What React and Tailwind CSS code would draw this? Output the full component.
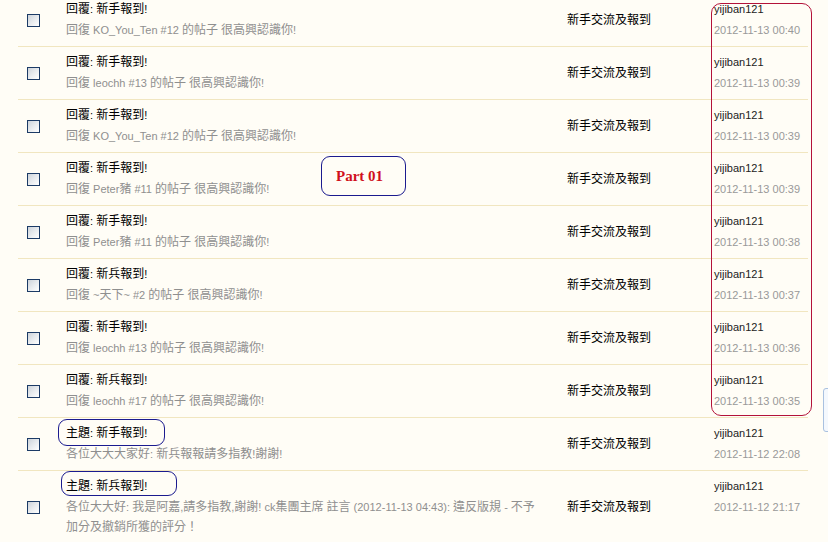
// Forum "my replies" list with red/blue annotation marks drawn over it.
const ROWS = [
  { title: '回覆: 新手報到!', sub: '回復 KO_You_Ten #12 的帖子 很高興認識你!', date: '2012-11-13 00:40' },
  { title: '回覆: 新手報到!', sub: '回復 leochh #13 的帖子 很高興認識你!', date: '2012-11-13 00:39' },
  { title: '回覆: 新手報到!', sub: '回復 KO_You_Ten #12 的帖子 很高興認識你!', date: '2012-11-13 00:39' },
  { title: '回覆: 新手報到!', sub: '回復 Peter豬 #11 的帖子 很高興認識你!', date: '2012-11-13 00:39' },
  { title: '回覆: 新手報到!', sub: '回復 Peter豬 #11 的帖子 很高興認識你!', date: '2012-11-13 00:38' },
  { title: '回覆: 新兵報到!', sub: '回復 ~天下~ #2 的帖子 很高興認識你!', date: '2012-11-13 00:37' },
  { title: '回覆: 新手報到!', sub: '回復 leochh #13 的帖子 很高興認識你!', date: '2012-11-13 00:36' },
  { title: '回覆: 新兵報到!', sub: '回復 leochh #17 的帖子 很高興認識你!', date: '2012-11-13 00:35' },
  { title: '主題: 新手報到!', sub: '各位大大大家好: 新兵報報請多指教!謝謝!', date: '2012-11-12 22:08' },
  {
    title: '主題: 新兵報到!',
    sub: '各位大大好: 我是阿嘉,請多指教,謝謝! ck集團主席 註言 (2012-11-13 04:43): 違反版規 - 不予',
    sub2: '加分及撤銷所獲的評分！',
    date: '2012-11-12 21:17',
  },
]

// latin runs a touch smaller than the CJK glyphs, like the old Tahoma/MingLiU mix
function Mixed({ text }) {
  return text.split(/([\x00-\x7F]+)/).map((part, i) =>
    /^[\x00-\x7F]+$/.test(part) ? (
      <span key={i} className="text-[11px]">{part}</span>
    ) : (
      part
    )
  )
}

function Checkbox() {
  return (
    <span className="block h-[13px] w-[13px] border border-[#1c3b66] bg-gradient-to-br from-[#cdd3da] via-[#e8ebee] to-white" />
  )
}

function Row({ row }) {
  return (
    <div className="flex border-b border-[#f1e6c0]">
      <div className="flex w-[48px] shrink-0 items-center pl-[9px]">
        <Checkbox />
      </div>
      <div className="w-[501px] shrink-0 pt-[5px] pb-[6px] pr-[20px]">
        <div className="text-[12px] leading-[20px] text-black">
          <Mixed text={row.title} />
        </div>
        <div className="mt-px text-[12px] leading-[20px] text-[#8f8f8f]">
          <Mixed text={row.sub} />
          {row.sub2 ? (
            <>
              <br />
              <Mixed text={row.sub2} />
            </>
          ) : null}
        </div>
      </div>
      <div className="flex w-[147px] shrink-0 items-center text-[12px] text-black">
        新手交流及報到
      </div>
      <div className="w-[94px] shrink-0 pt-[5px]">
        <div className="text-[11px] leading-[20px] text-[#222]">yijiban121</div>
        <div className="mt-px text-[11px] leading-[20px] text-[#999]">{row.date}</div>
      </div>
    </div>
  )
}

export default function App() {
  return (
    <div
      className="relative h-[542px] w-[828px] overflow-hidden bg-[#fffdf6]"
      style={{ fontFamily: '"Liberation Sans", "Noto Sans CJK TC", sans-serif' }}
    >
      <div className="ml-[18px] mt-[-6px] w-[790px]">
        {ROWS.map((row, i) => (
          <Row key={i} row={row} />
        ))}
      </div>

      {/* annotations */}
      <div className="pointer-events-none absolute left-[711px] top-[3px] h-[413px] w-[101px] rounded-[10px] border border-[#b3123a]" />
      <div className="pointer-events-none absolute left-[321px] top-[156px] flex h-[40px] w-[85px] items-center rounded-[9px] border border-[#1b1b8f] pl-[14px]">
        <span
          className="text-[15px] font-bold text-[#d0101c]"
          style={{ fontFamily: '"Liberation Serif", serif' }}
        >
          Part 01
        </span>
      </div>
      <div className="pointer-events-none absolute left-[58px] top-[419px] h-[27px] w-[107px] rounded-[9px] border border-[#1b1b8f]" />
      <div className="pointer-events-none absolute left-[61px] top-[471px] h-[25px] w-[116px] rounded-[9px] border border-[#1b1b8f]" />

      {/* edge of a floating button on the right */}
      <div className="absolute left-[823px] top-[388px] h-[44px] w-[12px] rounded-[3px] border border-[#a9c1e0] bg-[#f4f8fd]" />
    </div>
  )
}
